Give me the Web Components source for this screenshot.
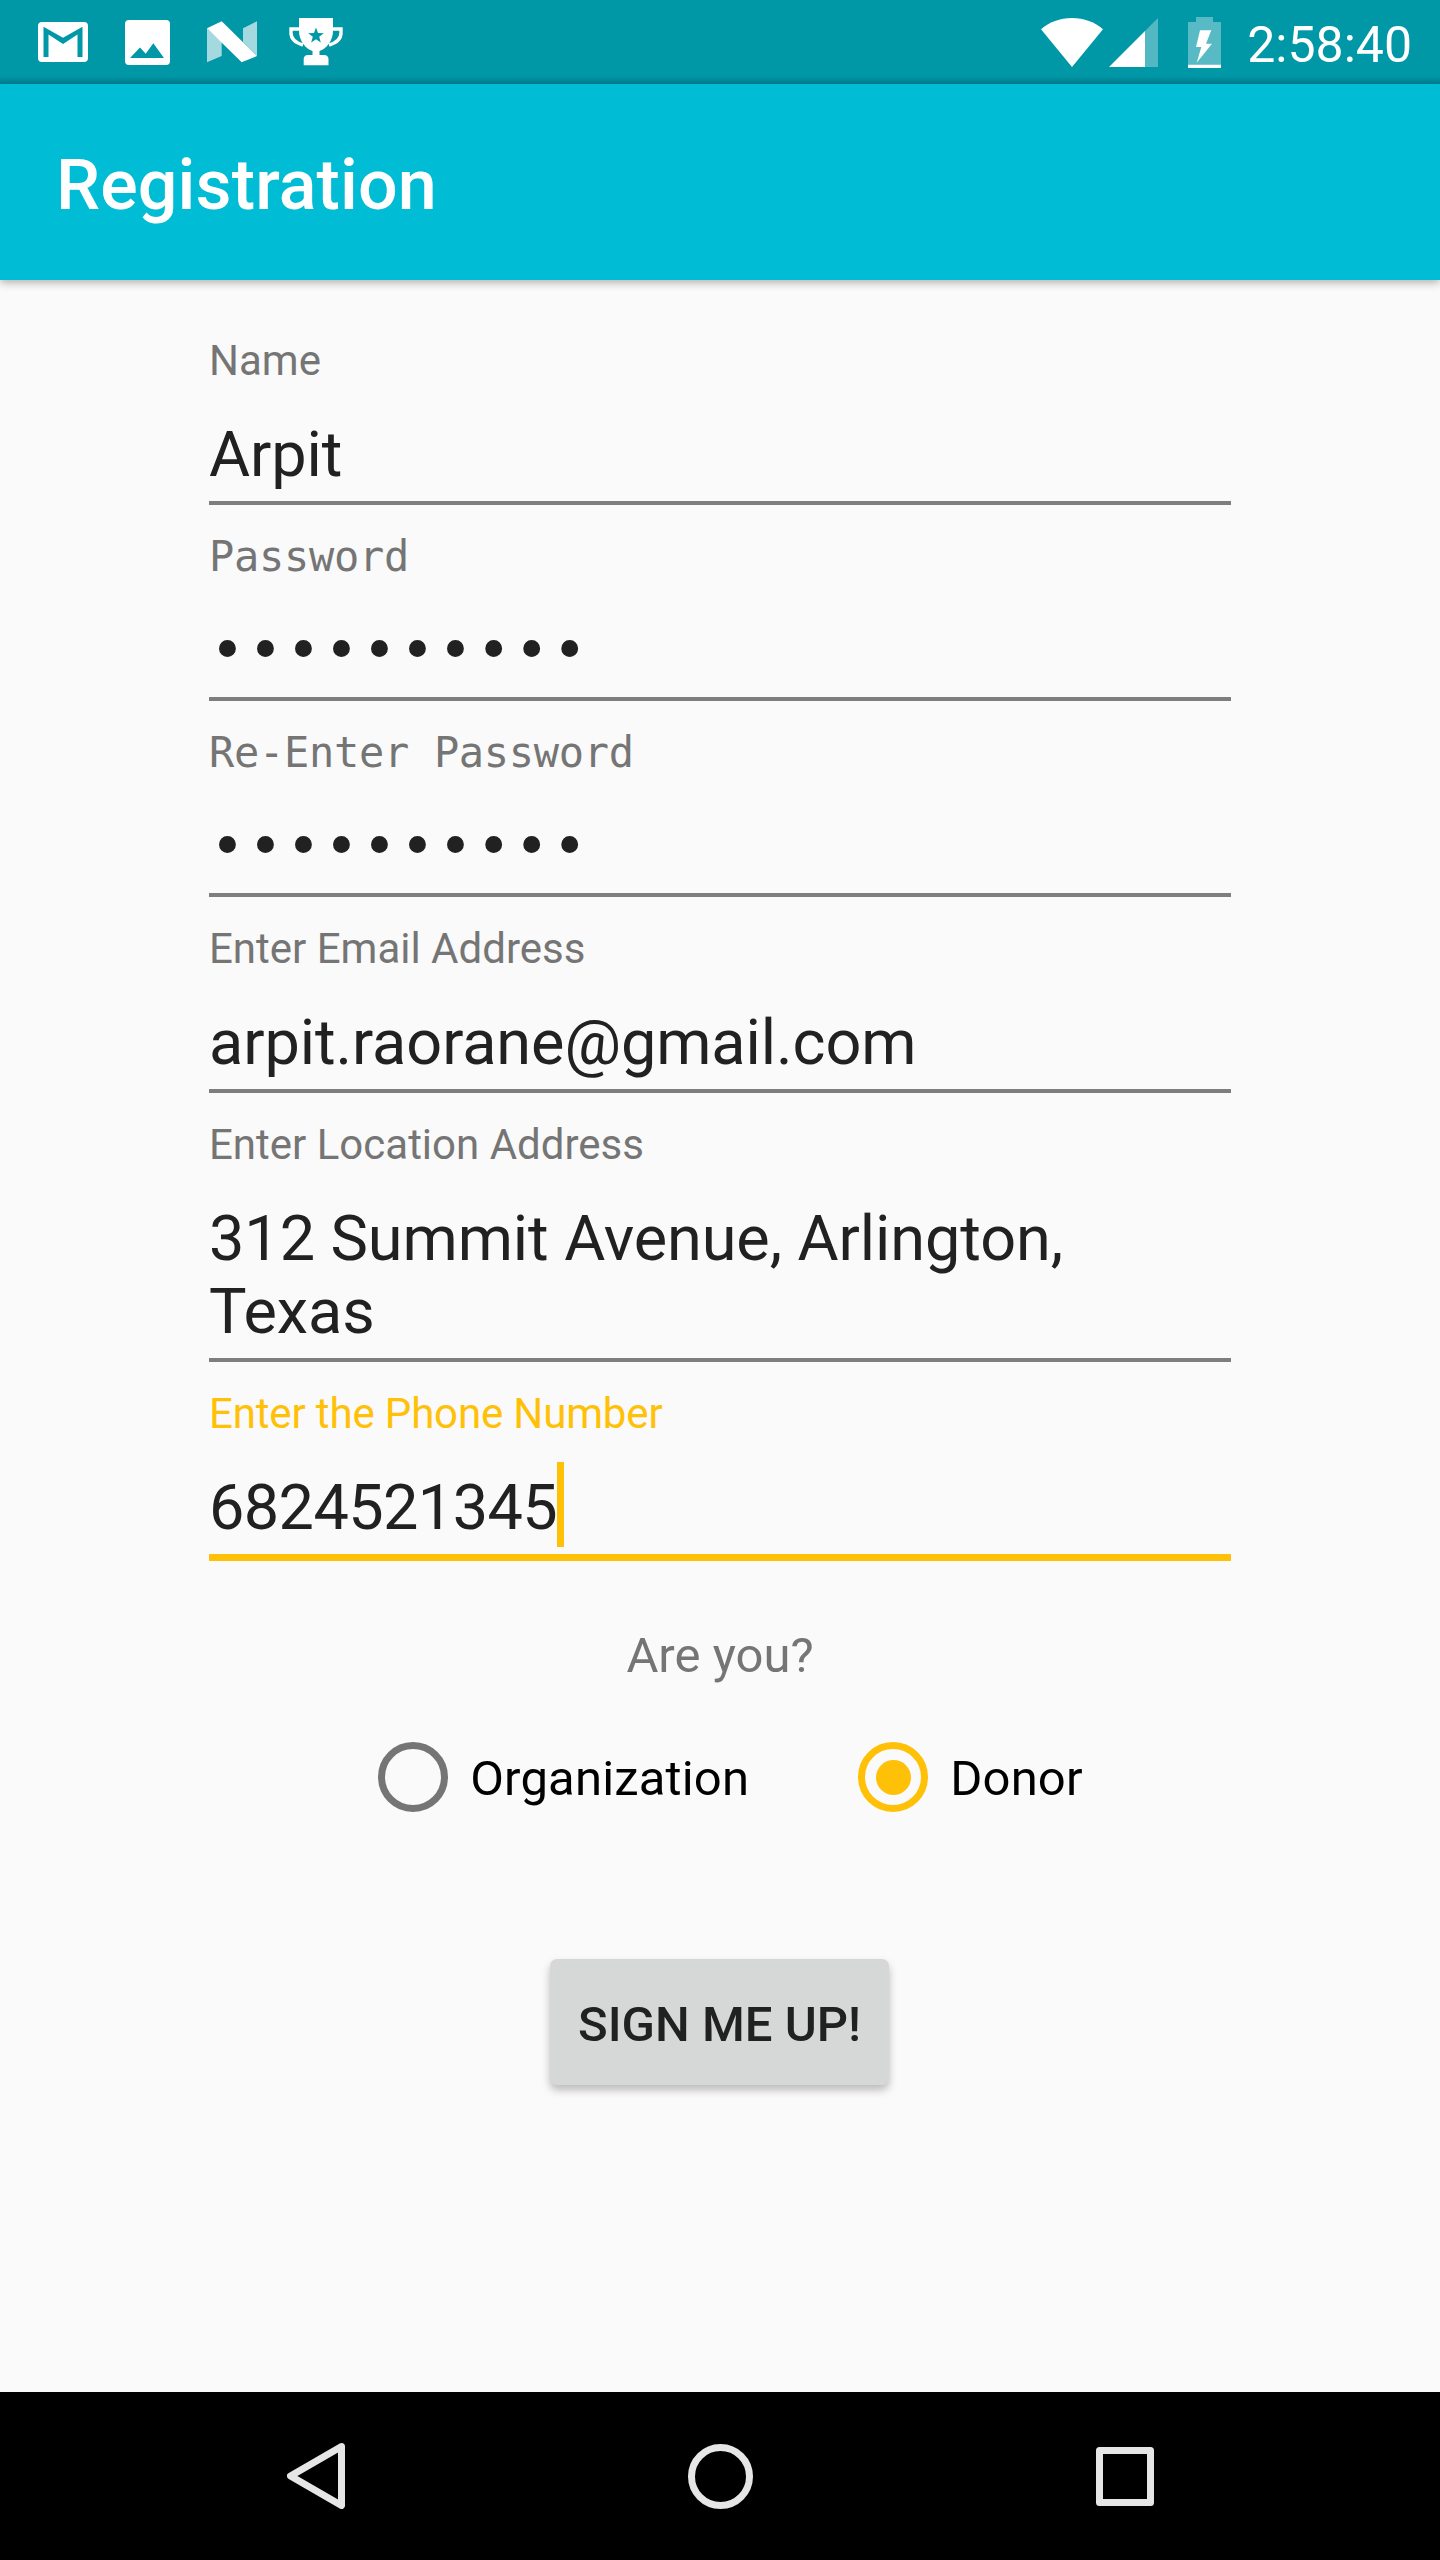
<!DOCTYPE html>
<html lang="en">
<head>
    <meta charset="UTF-8">
    <title>Registration</title>
    <style>
        html,body{
            margin:0;
            padding:0;
        }
        body{
            width:1440px;
            height:2560px;
            display:flex;
            flex-direction:column;
            background:#fafafa;
            font-family:Roboto,"Liberation Sans",sans-serif;
            overflow:hidden;
        }
    </style>
</head>
<body>
    <status-bar></status-bar>
    <app-bar>Registration</app-bar>
    <form-page>
        <text-field label="Name">Arpit</text-field>
        <text-field label="Password" type="password">••••••••••</text-field>
        <text-field label="Re-Enter Password" type="password">••••••••••</text-field>
        <text-field label="Enter Email Address">arpit.raorane@gmail.com</text-field>
        <text-field label="Enter Location Address">312 Summit Avenue, Arlington,<br>Texas</text-field>
        <text-field label="Enter the Phone Number" focused>6824521345</text-field>
        <radio-group label="Are you?">
            <radio-option>Organization</radio-option>
            <radio-option checked>Donor</radio-option>
        </radio-group>
        <raised-button>SIGN ME UP!</raised-button>
    </form-page>
    <nav-bar></nav-bar>

    <template id="status-bar">
        <style>
            :host{
                display:flex;
                justify-content:space-between;
                align-items:center;
                height:84px;
                flex:none;
                padding:0 28px 0 38px;
                box-sizing:border-box;
                background:linear-gradient(#0097a7 0,#0097a7 76px,#00808e 84px);
                color:#fff;
                font:400 50px Roboto,sans-serif;
            }
            .group{
                display:flex;
                align-items:center;
            }
            svg{
                display:block;
                flex:none;
            }
            .left svg + svg{
                margin-left:37px;
            }
            .left svg:last-child{
                margin-left:32px;
            }
            .signal{
                margin-left:6px;
            }
            .battery{
                margin-left:30px;
            }
            .time{
                margin-left:26px;
                padding-top:5px;
            }
        </style>
        <div class="group left">
            <svg width="50" height="40" viewBox="0 0 50 40">
                <rect width="50" height="40" rx="4" fill="#fff"/>
                <path d="M5.5 4.7 25 15.7 44.5 4.7V35H39.5V12.5L25 22 10.5 12.5V35H5.5Z" fill="#0097a7"/>
            </svg>
            <svg width="45" height="45" viewBox="0 0 45 45">
                <rect width="45" height="45" rx="4" fill="#fff"/>
                <path d="M5 38 15 27.5 20.7 33.7 28.3 23.3 39 38Z" fill="#0097a7"/>
            </svg>
            <svg width="50" height="42" viewBox="0 0 50 42">
                <path d="M0 7.3 14.7 21V35L0 41.3ZM36 7.3 50 .3V35L36 21Z" fill="#fff" fill-opacity=".64"/>
                <path d="M0 7.3 14.7 .3 50 35 34.7 41.3Z" fill="#fff"/>
            </svg>
            <svg width="54" height="48" viewBox="0 0 54 48">
                <path d="M10 0H44V13C44 23 37 31 30.5 33V37H35C38 37 39.5 39 39.5 41V47.3H14.7V41C14.7 39 16 37 19 37H23.5V33C17 31 10 23 10 13Z" fill="#fff"/>
                <path d="M11 11H2V15C2 21 7 25 14 27M43 11H52V15C52 21 47 25 40 27" fill="none" stroke="#fff" stroke-width="3.4"/>
                <path d="M27 9.5 29 15 34.8 15.2 30.2 18.8 31.8 24.5 27 21.2 22.2 24.5 23.8 18.8 19.2 15.2 25 15Z" fill="#0097a7"/>
            </svg>
        </div>
        <div class="group">
            <svg width="62" height="49" viewBox="0 0 62 49">
                <path d="M0 11.3C8 4 19 0 31 0S54 4 62 11.3L31 49Z" fill="#fff"/>
            </svg>
            <svg class="signal" width="49" height="49" viewBox="0 0 49 49">
                <path d="M36 13 49 0V49H36Z" fill="#fff" fill-opacity=".32"/>
                <path d="M0 49 36 13V49Z" fill="#fff"/>
            </svg>
            <svg class="battery" width="33" height="51" viewBox="0 0 33 51">
                <path d="M8 0H25V5H33V47H0V5H8Z" fill="#fff" fill-opacity=".34"/>
                <path d="M0 47.5H33V51H0Z" fill="#fff"/>
                <path d="M12 13.3H23.3L18 26.7H24L8.7 45.7 13.3 30H8Z" fill="#fff"/>
            </svg>
            <span class="time">2:58:40</span>
        </div>
    </template>

    <template id="app-bar">
        <style>
            :host{
                display:flex;
                align-items:center;
                height:196px;
                flex:none;
                padding:6px 0 0 56px;
                box-sizing:border-box;
                background:#00bcd4;
                color:#fff;
                font:500 70px Roboto,sans-serif;
                letter-spacing:.12px;
                box-shadow:0 3px 8px rgba(0,0,0,.28);
                position:relative;
            }
        </style>
        <slot></slot>
    </template>

    <template id="form-page">
        <style>
            :host{
                display:flex;
                flex-direction:column;
                flex:1;
                padding:29px 209px 0;
                box-sizing:border-box;
            }
        </style>
        <slot></slot>
    </template>

    <template id="text-field">
        <style>
            :host{
                display:block;
                padding-top:27px;
                color:#212121;
            }
            .label{
                height:49px;
                font:400 42px/49px Roboto,sans-serif;
                color:#757575;
                white-space:nowrap;
            }
            .value{
                margin-top:33px;
                padding-bottom:10px;
                border-bottom:4px solid #7e7e7e;
                font:400 63px/73px Roboto,sans-serif;
                letter-spacing:-.08px;
                white-space:nowrap;
            }
            .caret{
                display:none;
                width:7px;
                height:85px;
                margin:-9px 0 -3px;
                background:#ffc107;
                vertical-align:-15px;
            }
            :host([type=password]) .label{
                font-family:"DejaVu Sans Mono",monospace;
                letter-spacing:-.3px;
            }
            :host([type=password]) .value{
                padding-left:1px;
                font:400 58px/73px "DejaVu Sans Mono",monospace;
                letter-spacing:3.1px;
            }
            :host([focused]) .label{
                color:#ffc107;
                letter-spacing:-.15px;
            }
            :host([focused]) .value{
                border-bottom:7px solid #ffc107;
                letter-spacing:-.6px;
            }
            :host([focused]) .caret{
                display:inline-block;
            }
        </style>
        <div class="label"></div>
        <div class="value"><slot></slot><span class="caret"></span></div>
    </template>

    <template id="radio-group">
        <style>
            :host{
                display:block;
                margin-top:66px;
            }
            .title{
                font:400 49px/58px Roboto,sans-serif;
                color:#757575;
                text-align:center;
            }
            .row{
                display:flex;
                justify-content:center;
                gap:109px;
                margin-top:57px;
                padding-left:21px;
            }
        </style>
        <div class="title"></div>
        <div class="row"><slot></slot></div>
    </template>

    <template id="radio-option">
        <style>
            :host{
                display:flex;
                align-items:center;
                gap:22px;
                color:#000;
                font:400 49px/66px Roboto,sans-serif;
                letter-spacing:.17px;
            }
            .ring{
                width:70px;
                height:70px;
                box-sizing:border-box;
                border:7px solid #757575;
                border-radius:50%;
                display:flex;
                align-items:center;
                justify-content:center;
            }
            .text{
                padding-top:4px;
            }
            :host([checked]) .ring{
                border-color:#ffc107;
            }
            :host([checked]) .ring::after{
                content:"";
                width:35px;
                height:35px;
                border-radius:50%;
                background:#ffc107;
            }
        </style>
        <div class="ring"></div>
        <div class="text"><slot></slot></div>
    </template>

    <template id="raised-button">
        <style>
            :host{
                display:flex;
                align-self:center;
                align-items:center;
                justify-content:center;
                width:339px;
                height:126px;
                box-sizing:border-box;
                padding-top:4px;
                margin:147px 1px 0 0;
                background:#d6d7d7;
                border-radius:7px;
                color:#212121;
                font:500 49px Roboto,sans-serif;
                box-shadow:0 5px 9px rgba(0,0,0,.26);
            }
        </style>
        <slot></slot>
    </template>

    <template id="nav-bar">
        <style>
            :host{
                display:flex;
                justify-content:center;
                align-items:center;
                gap:343px;
                height:168px;
                flex:none;
                background:#000;
            }
            svg{
                display:block;
            }
        </style>
        <svg width="58" height="66" viewBox="0 0 58 66">
            <path d="M54.5 3.5 3.5 33 54.5 62.5Z" fill="none" stroke="#e6e6e6" stroke-width="7" stroke-linejoin="round"/>
        </svg>
        <svg width="65" height="65" viewBox="0 0 65 65">
            <circle cx="32.5" cy="32.5" r="29" fill="none" stroke="#e6e6e6" stroke-width="7"/>
        </svg>
        <svg width="58" height="59" viewBox="0 0 58 59">
            <rect x="3.5" y="3.5" width="51" height="52" fill="none" stroke="#e6e6e6" stroke-width="7" stroke-linejoin="round"/>
        </svg>
    </template>
</body>
<script>
    // every element just clones its template into an open shadow root
    class BaseElement extends HTMLElement{
        constructor(){
            super();
            const shadow = this.attachShadow({mode:'open'});
            const templateDOM = document.getElementById(this.localName);
            shadow.appendChild(templateDOM.content.cloneNode(true));
        }
    }
    class StatusBar extends BaseElement{}
    class AppBar extends BaseElement{}
    class FormPage extends BaseElement{}
    class RadioOption extends BaseElement{}
    class RaisedButton extends BaseElement{}
    class NavBar extends BaseElement{}
    class TextField extends BaseElement{
        connectedCallback(){
            this.shadowRoot.querySelector('.label').textContent = this.getAttribute('label');
        }
    }
    class RadioGroup extends BaseElement{
        connectedCallback(){
            this.shadowRoot.querySelector('.title').textContent = this.getAttribute('label');
        }
    }
    customElements.define('status-bar',StatusBar);
    customElements.define('app-bar',AppBar);
    customElements.define('form-page',FormPage);
    customElements.define('text-field',TextField);
    customElements.define('radio-group',RadioGroup);
    customElements.define('radio-option',RadioOption);
    customElements.define('raised-button',RaisedButton);
    customElements.define('nav-bar',NavBar);
</script>
</html>
